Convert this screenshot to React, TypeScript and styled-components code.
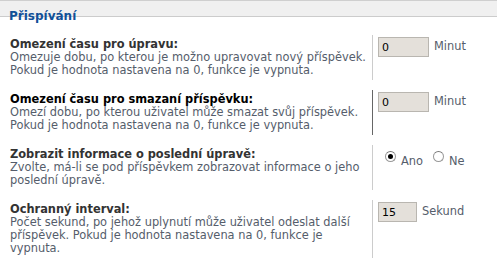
import styled, { createGlobalStyle } from "styled-components";

const Global = createGlobalStyle`
  html, body {
    margin: 0;
    padding: 0;
    background: #fff;
  }
  body {
    font-family: "DejaVu Sans", Verdana, sans-serif;
    font-size: 11.4px;
    color: #536482;
  }
`;

const Panel = styled.div`
  width: 497px;
  position: relative;
`;

const TopBand = styled.div`
  height: 15px;
  background: #f0f0f0;
  border-top: 1px solid #cfcfcf;
  border-bottom: 1px solid #cccccc;
`;

const Legend = styled.div`
  position: absolute;
  left: 9px;
  top: 9px;
  font-size: 12px;
  font-weight: bold;
  color: #115098;
  line-height: 14px;
`;

const Rows = styled.div`
  display: flex;
  flex-direction: column;
  gap: 10px;
  padding-top: 18px;
`;

const Row = styled.div`
  display: grid;
  grid-template-columns: 373px 1fr;
  line-height: 13px;
`;

const Term = styled.div<{ $active?: boolean }>`
  padding: 3px 0 3px 10px;
  border-right: 1px solid ${(p) => (p.$active ? "#666" : "#cccccc")};
`;

const Title = styled.div<{ $active?: boolean }>`
  font-weight: bold;
  color: ${(p) => (p.$active ? "#000" : "#333")};
`;

const Desc = styled.div`
  color: #555d6b;
`;

const Field = styled.div`
  display: flex;
  align-items: flex-start;
  gap: 5px;
  padding: 2px 0 0 5px;
`;

const Input = styled.div<{ $w: number }>`
  width: ${(p) => p.$w}px;
  height: 20px;
  box-sizing: border-box;
  background: #e4e0da;
  border: 1px solid #b9b6b0;
  color: #000;
  font-size: 11px;
  line-height: 19px;
  padding-left: 3px;
`;

const Unit = styled.span`
  color: #555d6b;
  line-height: 13px;
  padding-top: 3px;
`;

const Radios = styled.div`
  display: flex;
  align-items: flex-start;
  gap: 10px;
  padding: 3px 0 0 7px;
`;

const Radio = styled.label`
  display: flex;
  align-items: flex-start;
  gap: 5px;
  color: #555d6b;
`;

const Dot = styled.span<{ $on?: boolean }>`
  width: 9px;
  height: 9px;
  border-radius: 50%;
  border: 1px solid #9a9a9a;
  border-top-color: #777;
  background: #fff;
  position: relative;
  margin-top: 1px;
  &::after {
    content: "";
    display: ${(p) => (p.$on ? "block" : "none")};
    position: absolute;
    left: 2px;
    top: 2px;
    width: 5px;
    height: 5px;
    border-radius: 50%;
    background: #000;
  }
`;

const RadioText = styled.span`
  padding-top: 5px;
`;

export default function App() {
  return (
    <Panel>
      <Global />
      <TopBand />
      <Legend>Přispívání</Legend>
      <Rows>
        <Row>
          <Term>
            <Title>Omezení času pro úpravu:</Title>
            <Desc>
              Omezuje dobu, po kterou je možno upravovat nový příspěvek. Pokud je hodnota
              nastavena na 0, funkce je vypnuta.
            </Desc>
          </Term>
          <Field>
            <Input $w={51}>0</Input>
            <Unit>Minut</Unit>
          </Field>
        </Row>
        <Row>
          <Term $active>
            <Title $active>Omezení času pro smazaní příspěvku:</Title>
            <Desc>
              Omezí dobu, po kterou uživatel může smazat svůj příspěvek. Pokud je hodnota
              nastavena na 0, funkce je vypnuta.
            </Desc>
          </Term>
          <Field>
            <Input $w={51}>0</Input>
            <Unit>Minut</Unit>
          </Field>
        </Row>
        <Row>
          <Term>
            <Title>Zobrazit informace o poslední úpravě:</Title>
            <Desc>Zvolte, má-li se pod příspěvkem zobrazovat informace o jeho poslední úpravě.</Desc>
          </Term>
          <Field>
            <Radios>
              <Radio>
                <Dot $on />
                <RadioText>Ano</RadioText>
              </Radio>
              <Radio>
                <Dot />
                <RadioText>Ne</RadioText>
              </Radio>
            </Radios>
          </Field>
        </Row>
        <Row>
          <Term>
            <Title>Ochranný interval:</Title>
            <Desc>
              Počet sekund, po jehož uplynutí může uživatel odeslat další příspěvek. Pokud je
              hodnota nastavena na 0, funkce je vypnuta.
            </Desc>
          </Term>
          <Field>
            <Input $w={39}>15</Input>
            <Unit>Sekund</Unit>
          </Field>
        </Row>
      </Rows>
    </Panel>
  );
}
